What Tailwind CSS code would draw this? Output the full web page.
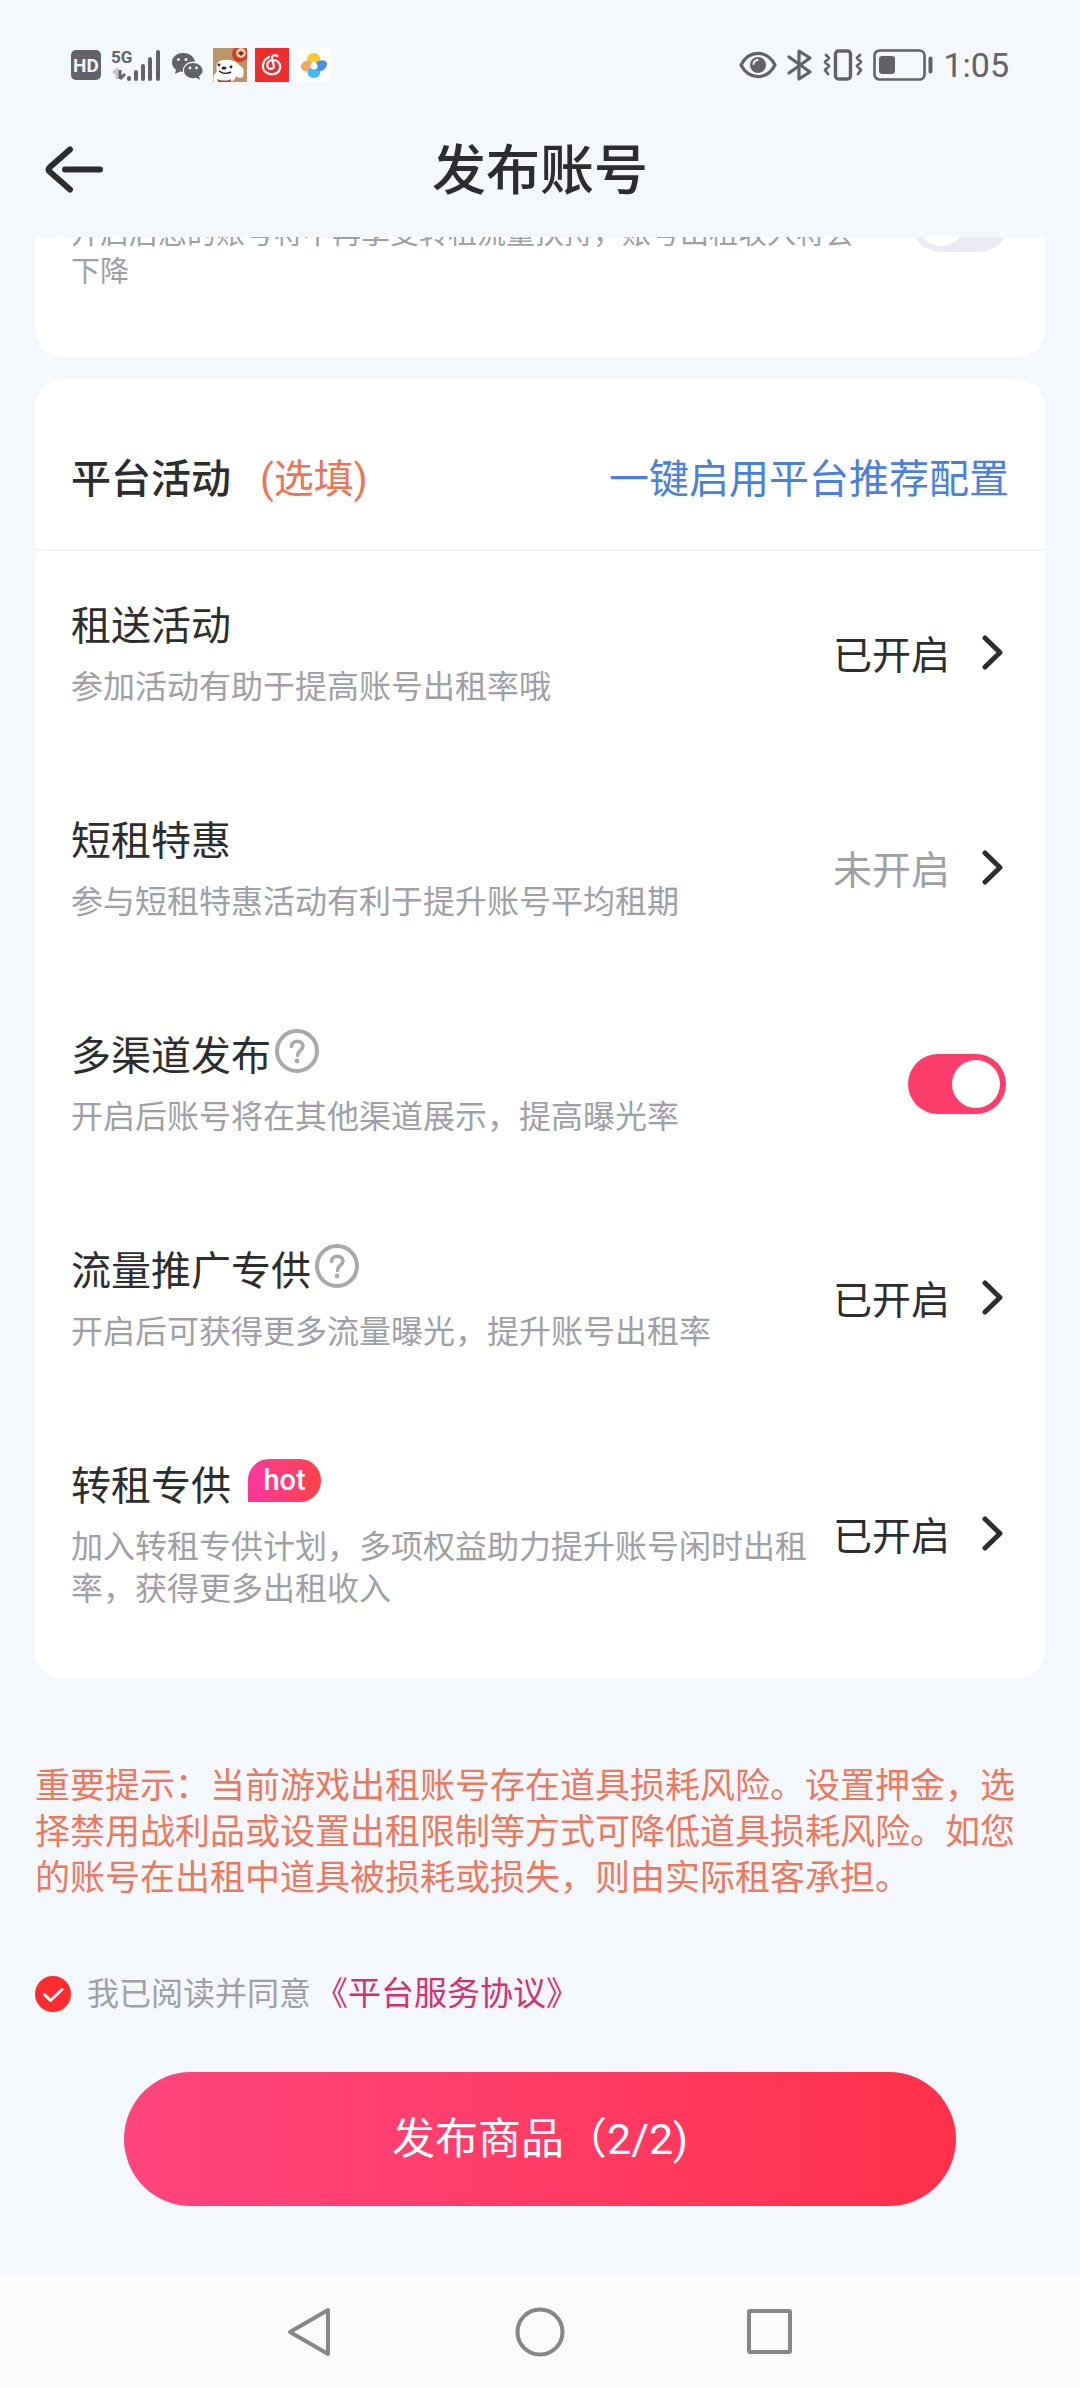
<!DOCTYPE html>
<html lang="zh-CN">
<head>
<meta charset="utf-8">
<meta name="viewport" content="width=device-width, initial-scale=1">
<title>发布账号</title>
<script src="https://cdn.jsdelivr.net/npm/@tailwindcss/browser@4"></script>
</head>
<body class="flex min-h-screen flex-col bg-[#f4f7fb] font-['Roboto','Noto_Sans_CJK_SC',sans-serif] text-[#2d2d2f]">

  <!-- System status bar -->
  <div class="flex h-[130px] items-center justify-between px-[71px] text-[#636267]">
    <div class="flex items-center gap-2">
      <svg class="h-[30px] w-[30px]" viewBox="0 0 30 30"><rect width="30" height="30" rx="5" fill="currentColor"/><text x="15" y="22" text-anchor="middle" font-size="19" font-weight="700" fill="#f4f7fb" font-family="Roboto, sans-serif">HD</text></svg>
      <svg class="h-[38px] w-[52px]" viewBox="0 0 52 38">
        <text x="2" y="17" font-size="17" font-weight="700" fill="currentColor" font-family="Roboto, sans-serif">5G</text>
        <path d="M4 27l4-3v9" fill="none" stroke="#c3c4c8" stroke-width="3"/>
        <path d="M11 24v9M11 33l5-5" fill="none" stroke="currentColor" stroke-width="3"/>
        <path d="M20 32v1M27 26v7M34 20v13M41 13v20M49 6v27" stroke="currentColor" stroke-width="4" stroke-linecap="round"/>
      </svg>
      <svg class="h-[30px] w-[36px]" viewBox="0 0 34 30">
        <path d="M13 3C6 3 2 7.500 2 12.500c0 3 1.500 5.500 4 7.200L5 24l5-2.400 3 .4c-1-6 4-11 12-10.600C24 6.500 19 3 13 3z" fill="currentColor"/>
        <path d="M23 13c-5 0-9 3.400-9 7.600s4 7.600 9 7.600l3-.5 4 2-1-3.400c2-1.400 3.500-3.400 3.500-5.700C32.500 16.400 28 13 23 13z" fill="currentColor"/>
        <g fill="#f4f7fb"><circle cx="8.500" cy="9.500" r="1.500"/><circle cx="16" cy="9.500" r="1.500"/><circle cx="20" cy="18" r="1.400"/><circle cx="26.500" cy="18" r="1.400"/></g>
      </svg>
      <svg class="h-[34px] w-[34px]" viewBox="0 0 34 34">
        <rect width="34" height="34" fill="#bd9467"/>
        <circle cx="27" cy="6" r="8" fill="#cf3f2b"/><circle cx="28" cy="5" r="5" fill="#f4c9a0"/><path d="M25 5l3-2 3 2-3 3z" fill="#7c2b1b"/>
        <path d="M1 34c-2-6 1-8 3-11C2 17 5 12 11 12c7-1 12 1 16 6 4 1 4 6 3 11-3 2-6 0-7-1-1 4-4 6-8 6z" fill="#fff"/>
        <circle cx="6" cy="17" r="1.400" fill="#222"/><circle cx="18" cy="19" r="1.400" fill="#222"/><ellipse cx="11" cy="20" rx="2.500" ry="1.600" fill="#222"/><path d="M6 23c4 3 8 3 12 1" fill="none" stroke="#222" stroke-width="1.400"/>
        <path d="M4 31c5 2 11 2 14 0v3H5z" fill="#c8402f"/>
      </svg>
      <svg class="h-[34px] w-[34px]" viewBox="0 0 34 34">
        <rect width="34" height="34" fill="#ee2d2f"/>
        <path d="M14 9C8 12 6 19 10 23.500c4 4 11 3.500 14-.5 3-5 0-11-6-11-4 0-6.500 3-5.500 6.500 1 3.500 6.500 3 6.500-.5L17 11c-.5-3.500 2.500-5 5.500-3" fill="none" stroke="#fff" stroke-width="2.200" stroke-linecap="round"/>
      </svg>
      <svg class="h-[34px] w-[34px]" viewBox="0 0 34 34">
        <rect width="34" height="34" rx="5" fill="#fff"/>
        <path d="M10 13c-1-5 3-8 7-8s7 3 6 8l-4 2c-1-2-3-2-5 0z" fill="#f8c832"/>
        <path d="M12 23c-5 1-8-1-8-4 0-4 4-7 9-6l2 2c-2 2-2 4-1 5z" fill="#f3a661"/>
        <path d="M23 22c1 5-2 8-6 8s-8-3-6-8l3-2c2 2 4 2 6 0z" fill="#48b9f4"/>
        <path d="M22 13c4-2 8 0 8 3 0 4-4 8-9 7l-1-3c1-1 1-3-1-5z" fill="#4a8fe0"/>
      </svg>
    </div>
    <div class="flex items-center gap-[10px]">
      <svg class="h-[32px] w-[38px]" viewBox="0 0 38 32"><path d="M2 16C10 0.500 28 0.500 36 16 28 31.500 10 31.500 2 16z" fill="none" stroke="currentColor" stroke-width="3.200" stroke-linejoin="round"/><circle cx="19" cy="16" r="8" fill="currentColor"/><path d="M14.500 15a4.500 4.500 0 0 1 4-4" fill="none" stroke="#f4f7fb" stroke-width="2" stroke-linecap="round"/></svg>
      <svg class="h-[32px] w-[26px]" viewBox="0 0 26 32"><path d="M2 8l21 15-11 7V2l11 7L2 24" fill="none" stroke="currentColor" stroke-width="3.200" stroke-linejoin="round" stroke-linecap="round"/></svg>
      <svg class="h-[32px] w-[40px]" viewBox="0 0 40 32"><rect x="12.500" y="2" width="15" height="28" rx="3" fill="none" stroke="currentColor" stroke-width="3.400"/><path d="M3 6l3 3-4 4 4 4-4 4 3 4M37 6l-3 3 4 4-4 4 4 4-3 4" fill="none" stroke="currentColor" stroke-width="2.800" stroke-linejoin="round" stroke-linecap="round"/></svg>
      <svg class="h-[32px] w-[60px]" viewBox="0 0 60 32"><rect x="1.500" y="1.500" width="50" height="29" rx="5" fill="none" stroke="currentColor" stroke-width="2.600"/><rect x="6" y="7" width="16" height="18" rx="3" fill="currentColor"/><path d="M57.500 9.500v13" stroke="currentColor" stroke-width="4" stroke-linecap="round"/></svg>
      <span class="text-[34px] leading-10">1:05</span>
    </div>
  </div>

  <!-- Title bar -->
  <header class="mb-[27px] grid h-20 grid-cols-[1fr_auto_1fr] items-center px-[44px]">
    <button type="button" aria-label="返回" class="justify-self-start">
      <svg class="h-[48px] w-[62px]" viewBox="0 0 62 48" fill="none" stroke="#2d2d30" stroke-width="6" stroke-linecap="round" stroke-linejoin="round"><path d="M26 3.500L5.500 21.500Q3.500 23.500 5.500 25.500L26 43.500M21 23.500H56"/></svg>
    </button>
    <h1 class="pt-1 text-[54px] font-medium leading-[72px]">发布账号</h1>
  </header>

  <main class="flex flex-col px-[35px]">
    <!-- Previous section, scrolled partly under the title bar -->
    <section class="flex h-[120px] items-end justify-between overflow-hidden rounded-b-[28px] bg-white px-[36px] pb-[66px]">
      <label for="no-sublet" class="w-[790px] shrink-0 text-[29px] leading-[38px] text-[#a09fa7]">开启后您的账号将不再享受转租流量扶持，账号出租收入将会下降</label>
      <input id="no-sublet" type="checkbox" role="switch" class="mb-[39px] h-[60px] w-[98px] shrink-0 appearance-none rounded-full bg-[#ebebf5] p-[6px] before:block before:h-12 before:w-12 before:rounded-full before:bg-white checked:bg-[#ff3d6b] checked:before:ml-auto">
    </section>

    <section class="mt-[22px] rounded-[28px] bg-white pb-[10px]">
      <div class="flex h-[172px] items-center justify-between border-b-2 border-[#f3f4f8] px-[36px] pt-8 text-[40px] leading-[56px]">
        <h2 class="font-medium">平台活动<span class="ml-[29px] font-normal text-[#ec7556]">(选填)</span></h2>
        <a href="#" class="text-[#4a80dd]">一键启用平台推荐配置</a>
      </div>

      <ul>
        <li class="flex items-center justify-between px-[36px] pb-[58px] pt-12">
          <div>
            <h3 class="text-[40px] leading-[56px]">租送活动</h3>
            <p class="mt-[11px] text-[32px] leading-[42px] text-[#a09fa7]">参加活动有助于提高账号出租率哦</p>
          </div>
          <button type="button" class="flex shrink-0 items-center gap-8 pr-[5px] text-[39px] leading-[56px]"><span class="pt-1">已开启</span>
            <svg class="h-[38px] w-[22px]" viewBox="0 0 22 38" fill="none" stroke="#2d2d30" stroke-width="5" stroke-linecap="round" stroke-linejoin="round"><path d="M3 3l15 14.500L3 32"/></svg>
          </button>
        </li>
        <li class="flex items-center justify-between px-[36px] pb-[58px] pt-12">
          <div>
            <h3 class="text-[40px] leading-[56px]">短租特惠</h3>
            <p class="mt-[11px] text-[32px] leading-[42px] text-[#a09fa7]">参与短租特惠活动有利于提升账号平均租期</p>
          </div>
          <button type="button" class="flex shrink-0 items-center gap-8 pr-[5px] text-[39px] leading-[56px] text-[#a09fa7]"><span class="pt-1">未开启</span>
            <svg class="h-[38px] w-[22px]" viewBox="0 0 22 38" fill="none" stroke="#2d2d30" stroke-width="5" stroke-linecap="round" stroke-linejoin="round"><path d="M3 3l15 14.500L3 32"/></svg>
          </button>
        </li>
        <li class="flex items-center justify-between px-[36px] pb-[58px] pt-12">
          <div>
            <div class="flex items-start gap-1">
              <h3 class="text-[40px] leading-[56px]"><label for="multi-channel">多渠道发布</label></h3>
              <button type="button" aria-label="多渠道发布说明">
                <svg class="h-[44px] w-[44px]" viewBox="0 0 44 44" fill="none" stroke="#a9a8ae"><circle cx="22" cy="22" r="20" stroke-width="4"/><path d="M16.500 17.500c0-7 11.500-7 11.500-.5 0 4.500-5.500 4.500-5.500 9.500" stroke-width="3.600" stroke-linecap="round"/><circle cx="22" cy="32" r="2.400" fill="#a9a8ae" stroke="none"/></svg>
              </button>
            </div>
            <p class="mt-[11px] text-[32px] leading-[42px] text-[#a09fa7]">开启后账号将在其他渠道展示，提高曝光率</p>
          </div>
          <input id="multi-channel" type="checkbox" role="switch" checked class="mr-[3px] h-[60px] w-[98px] shrink-0 appearance-none rounded-full bg-[#ebebf5] p-[6px] before:block before:h-12 before:w-12 before:rounded-full before:bg-white checked:bg-[#ff3d6b] checked:before:ml-auto">
        </li>
        <li class="flex items-center justify-between px-[36px] pb-[58px] pt-12">
          <div>
            <div class="flex items-start gap-1">
              <h3 class="text-[40px] leading-[56px]">流量推广专供</h3>
              <button type="button" aria-label="流量推广专供说明">
                <svg class="h-[44px] w-[44px]" viewBox="0 0 44 44" fill="none" stroke="#a9a8ae"><circle cx="22" cy="22" r="20" stroke-width="4"/><path d="M16.500 17.500c0-7 11.500-7 11.500-.5 0 4.500-5.500 4.500-5.500 9.500" stroke-width="3.600" stroke-linecap="round"/><circle cx="22" cy="32" r="2.400" fill="#a9a8ae" stroke="none"/></svg>
              </button>
            </div>
            <p class="mt-[11px] text-[32px] leading-[42px] text-[#a09fa7]">开启后可获得更多流量曝光，提升账号出租率</p>
          </div>
          <button type="button" class="flex shrink-0 items-center gap-8 pr-[5px] text-[39px] leading-[56px]"><span class="pt-1">已开启</span>
            <svg class="h-[38px] w-[22px]" viewBox="0 0 22 38" fill="none" stroke="#2d2d30" stroke-width="5" stroke-linecap="round" stroke-linejoin="round"><path d="M3 3l15 14.500L3 32"/></svg>
          </button>
        </li>
        <li class="flex items-center justify-between gap-5 px-[36px] pb-[58px] pt-12">
          <div>
            <div class="flex items-start gap-[17px]">
              <h3 class="text-[40px] leading-[56px]">转租专供</h3>
              <span class="h-[43px] w-[73px] rounded-[21px] rounded-bl-none bg-linear-to-r from-[#fb379a] to-[#ff4145] text-center text-[29px] font-medium leading-[43px] text-white">hot</span>
            </div>
            <p class="mt-[11px] text-[32px] leading-[42px] text-[#a09fa7]">加入转租专供计划，多项权益助力提升账号闲时出租率，获得更多出租收入</p>
          </div>
          <button type="button" class="flex shrink-0 items-center gap-8 pr-[5px] text-[39px] leading-[56px]"><span class="pt-1">已开启</span>
            <svg class="h-[38px] w-[22px]" viewBox="0 0 22 38" fill="none" stroke="#2d2d30" stroke-width="5" stroke-linecap="round" stroke-linejoin="round"><path d="M3 3l15 14.500L3 32"/></svg>
          </button>
        </li>
      </ul>
    </section>

    <p class="mt-[86px] text-[35px] leading-[46px] text-[#ea7a5e]">重要提示：当前游戏出租账号存在道具损耗风险。设置押金，选择禁用战利品或设置出租限制等方式可降低道具损耗风险。如您的账号在出租中道具被损耗或损失，则由实际租客承担。</p>

    <div class="mt-[68px] flex items-center text-[32px] leading-[48px]">
      <span class="grid h-9 w-9 place-items-center">
        <input id="agree" type="checkbox" checked class="col-start-1 row-start-1 h-9 w-9 appearance-none rounded-full bg-[#cfd0d6] checked:bg-[#fc2b2d]">
        <svg class="pointer-events-none col-start-1 row-start-1 h-9 w-9" viewBox="0 0 36 36" fill="none" stroke="#fff" stroke-width="3" stroke-linecap="round" stroke-linejoin="round"><path d="M9.500 18.500l6 6L27 13.500"/></svg>
      </span>
      <label for="agree" class="ml-4 text-[#a09fa7]">我已阅读并同意</label>
      <a href="#" class="ml-1 text-[33px] text-[#cf3470]">《平台服务协议》</a>
    </div>

    <button type="button" class="mx-[89px] mt-[54px] h-[134px] rounded-full bg-linear-to-r from-[#ff457f] to-[#ff3048] text-[43px] text-white">发布商品（2/2)</button>
  </main>

  <!-- System navigation bar -->
  <nav class="mt-auto flex h-[112px] items-center justify-center gap-[180px] bg-[#fbfbfb] text-[#878787]">
    <button type="button" aria-label="返回上一页"><svg class="h-[50px] w-[50px]" viewBox="0 0 50 50" fill="none" stroke="currentColor" stroke-width="4" stroke-linejoin="round"><path d="M43 3v44L5 25z"/></svg></button>
    <button type="button" aria-label="主屏幕"><svg class="h-[50px] w-[50px]" viewBox="0 0 50 50" fill="none" stroke="currentColor" stroke-width="4"><circle cx="25" cy="25" r="22.500"/></svg></button>
    <button type="button" aria-label="最近任务"><svg class="h-[50px] w-[50px]" viewBox="0 0 50 50" fill="none" stroke="currentColor" stroke-width="4" stroke-linejoin="round"><rect x="4" y="4" width="41" height="41" rx="1"/></svg></button>
  </nav>
</body>
</html>
